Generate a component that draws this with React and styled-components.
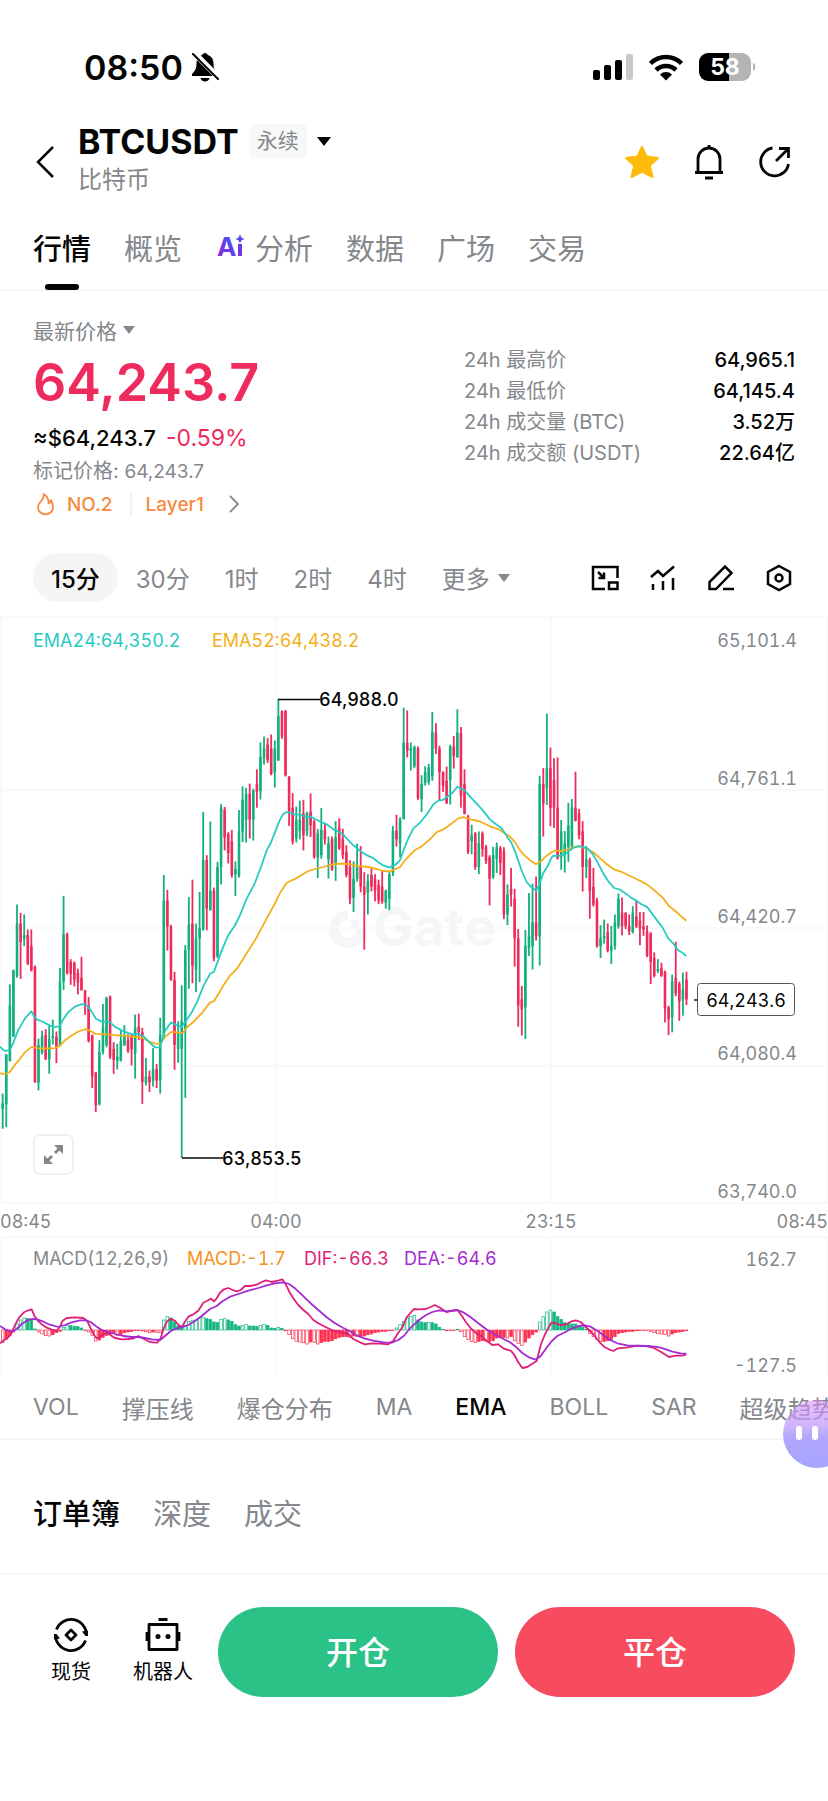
import React from "react";
import styled, { createGlobalStyle, css } from "styled-components";

const GlobalStyle = createGlobalStyle`
  * {
    box-sizing: border-box;
  }
  body {
    margin: 0;
    background: #fff;
    color: #050505;
    font-family: Inter, "Noto Sans CJK SC", sans-serif;
  }
  button,
  a {
    font: inherit;
    color: inherit;
  }
`;

const GREY = "#84888c";
const UP = "#12b07c";
const DOWN = "#ee2b5c";

const plainButton = css`
  display: flex;
  align-items: center;
  border: 0;
  padding: 0;
  background: none;
  cursor: pointer;
  white-space: nowrap;
`;

const Page = styled.div`
  position: relative;
  overflow: hidden;
  min-height: 100vh;
`;

const StatusBar = styled.div`
  display: flex;
  align-items: center;
  justify-content: space-between;
  height: 116px;
  padding: 18px 72px 0 84px;
`;

const Clock = styled.div`
  display: flex;
  align-items: center;
  gap: 8px;
  font-size: 34px;
  font-weight: 600;
`;

const StatusIcons = styled.div`
  display: flex;
  align-items: center;
  gap: 15px;
`;

const Header = styled.header`
  display: flex;
  align-items: center;
  height: 92px;
  padding: 0 37px 0 36px;
`;

const IconButton = styled.button`
  ${plainButton}
`;

const Names = styled.div`
  flex: 1;
  margin-left: 24px;
  padding-bottom: 8px;
`;

const TitleRow = styled.div`
  display: flex;
  align-items: center;
  gap: 10px;
  height: 44px;
`;

const Title = styled.h1`
  margin: 0;
  font-size: 34px;
  font-weight: 700;
`;

const Tag = styled.span`
  padding: 2px 8px;
  border-radius: 5px;
  background: #f7f8f8;
  color: ${GREY};
  font-size: 21px;
  line-height: 30px;
`;

const Subtitle = styled.div`
  color: ${GREY};
  font-size: 24px;
  line-height: 34px;
`;

const HeaderActions = styled.div`
  display: flex;
  gap: 34px;
`;

const Caret = styled.span`
  border-top: ${(p) => p.size + 2}px solid ${(p) => p.color || GREY};
  border-left: ${(p) => p.size}px solid transparent;
  border-right: ${(p) => p.size}px solid transparent;
`;

const Tabs = styled.nav`
  display: flex;
  gap: 33px;
  height: 83px;
  padding: 0 33px;
  border-bottom: 2px solid #f5f5f6;
`;

const Tab = styled.button`
  ${plainButton}
  position: relative;
  gap: 9px;
  padding-bottom: 4px;
  color: ${(p) => (p.$active ? "#050505" : GREY)};
  font-size: 29px;
  font-weight: ${(p) => (p.$active ? 500 : 400)};
  ${(p) =>
    p.$underline &&
    css`
      &::after {
        content: "";
        position: absolute;
        left: 12px;
        right: 12px;
        bottom: -1px;
        height: 6px;
        border-radius: 3px;
        background: #050505;
      }
    `}
`;

const Summary = styled.section`
  display: flex;
  justify-content: space-between;
  padding: 24px 33px 0;
`;

const PriceColumn = styled.div`
  display: flex;
  flex-direction: column;
  align-items: flex-start;
`;

const PriceKind = styled.button`
  ${plainButton}
  gap: 6px;
  height: 30px;
  color: ${GREY};
  font-size: 21px;
`;

const LastPrice = styled.div`
  color: ${DOWN};
  font-size: 52px;
  font-weight: 600;
  line-height: 76px;
`;

const PriceLine = styled.div`
  display: flex;
  gap: 10px;
  font-size: 22px;
  font-weight: 500;
  line-height: 34px;
`;

const Change = styled.span`
  color: ${DOWN};
  font-size: 23px;
  font-weight: 400;
`;

const MarkPrice = styled.div`
  color: ${GREY};
  font-size: 20px;
  line-height: 32px;
`;

const MarkValue = styled.span`
  font-size: 19px;
  line-height: 1;
`;

const Labels = styled.a`
  display: flex;
  align-items: center;
  height: 34px;
  color: #f78a3e;
  font-size: 19px;
  font-weight: 500;
  text-decoration: none;
`;

const LabelText = styled.span`
  padding: 0 17px 0 13px;
  & + & {
    padding: 0 25px 0 14px;
    border-left: 2px solid #f2f2f3;
  }
`;

const Stats = styled.dl`
  display: grid;
  grid-template-columns: auto auto;
  flex: 0 0 331px;
  align-content: start;
  margin: 30px 0 0;
  font-size: 20px;
  line-height: 31px;
`;

const StatName = styled.dt`
  color: ${GREY};
`;

const StatValue = styled.dd`
  margin: 0;
  text-align: right;
  font-weight: 500;
`;

const PeriodBar = styled.div`
  display: flex;
  align-items: center;
  justify-content: space-between;
  height: 49px;
  margin-top: 32px;
  padding: 0 35px 0 33px;
`;

const Periods = styled.div`
  display: flex;
  gap: 1px;
  height: 100%;
`;

const Period = styled.button`
  ${plainButton}
  gap: 8px;
  padding: 0 ${(p) => (p.$active ? 18 : 17)}px;
  border-radius: 25px;
  background: ${(p) => (p.$active ? "#f5f5f6" : "none")};
  color: ${(p) => (p.$active ? "#050505" : GREY)};
  font-size: 24px;
  font-weight: ${(p) => (p.$active ? 500 : 400)};
`;

const Tools = styled.div`
  display: flex;
  gap: 30px;
`;

const ChartArea = styled.section`
  position: relative;
  margin-top: 8px;
`;

const Chart = styled.svg`
  display: block;
  width: 100%;
  height: auto;
  font-size: 18px;
  font-variant-numeric: tabular-nums;
`;

const ExpandButton = styled.button`
  ${plainButton}
  position: absolute;
  left: 33px;
  top: 524px;
  justify-content: center;
  width: 41px;
  height: 41px;
  border: 2px solid #f1f1f2;
  border-radius: 7px;
  background: #fff;
`;

const Indicators = styled.div`
  display: flex;
  gap: 43px;
  height: 64px;
  padding: 0 0 0 33px;
  overflow: hidden;
  border-bottom: 2px solid #f5f5f6;
`;

const Indicator = styled.button`
  ${plainButton}
  flex: none;
  color: ${(p) => (p.$active ? "#050505" : GREY)};
  font-size: ${(p) => (p.$latin ? 23 : 24)}px;
  font-weight: ${(p) => (p.$active ? 500 : 400)};
`;

const BookTabs = styled.div`
  display: flex;
  gap: 33px;
  height: 135px;
  padding: 14px 33px 0;
  border-bottom: 2px solid #f6f6f7;
`;

const Footer = styled.footer`
  display: flex;
  align-items: center;
  gap: 17px;
  padding: 32px 33px 0 51px;
`;

const Shortcuts = styled.div`
  display: flex;
  gap: 42px;
  margin-right: 8px;
`;

const Shortcut = styled.a`
  display: flex;
  flex-direction: column;
  align-items: center;
  gap: 4px;
  font-size: 20px;
  line-height: 30px;
  text-decoration: none;
`;

const TradeButton = styled.button`
  flex: 1;
  height: 90px;
  padding: 0 0 4px;
  border: 0;
  border-radius: 45px;
  background: ${(p) => p.$color};
  color: #fff;
  font-size: 32px;
  font-weight: 500;
  cursor: pointer;
`;

const Assistant = styled.button`
  position: absolute;
  right: -23px;
  top: 1400px;
  display: flex;
  gap: 10px;
  width: 68px;
  height: 68px;
  padding: 26px 0 0 13px;
  border: 0;
  border-radius: 34px;
  background: linear-gradient(rgba(222, 130, 245, 0.5), rgba(190, 160, 252, 0.8) 40%, #b3a6fd 55%, #a5a5ff);
  cursor: pointer;
`;

const Eye = styled.span`
  width: 6px;
  height: 14px;
  border-radius: 3px;
  background: #fff;
`;

const tabs = ["行情", "概览", "分析", "数据", "广场", "交易"];
const stats = [
  ["24h 最高价", "64,965.1"],
  ["24h 最低价", "64,145.4"],
  ["24h 成交量 (BTC)", "3.52万"],
  ["24h 成交额 (USDT)", "22.64亿"],
];
const periods = ["15分", "30分", "1时", "2时", "4时"];
const indicators = ["VOL", "撑压线", "爆仓分布", "MA", "EMA", "BOLL", "SAR", "超级趋势"];

// 15 minute candles: high, low, open, close, as steps down from the top of the scale
const candles = [
  [1223,1312,1262,1248],[1124,1308,1250,1124],[947,1142,1140,1000],[909,1080,1078,912],
  [745,930,925,793],[766,933,793,840],[770,850,832,822],[808,898,822,895],
  [808,914,850,912],[899,1196,902,1194],[1084,1215,1195,1100],[1064,1124,1120,1078],
  [1060,1138,1075,1136],[1050,1173,1136,1085],[1036,1099,1082,1078],[1066,1146,1080,1104],
  [905,1104,1100,940],[723,961,940,820],[816,922,820,918],[883,948,890,920],
  [889,952,892,935],[907,972,918,942],[877,962,930,962],[961,1024,962,1000],
  [979,1094,1000,1090],[1074,1209,1076,1180],[1168,1270,1170,1252],[1088,1253,1250,1118],
  [996,1124,1118,1056],[978,1106,1100,982],[975,1136,978,1130],[1093,1173,1110,1138],
  [1097,1162,1140,1130],[1064,1142,1140,1090],[1050,1103,1100,1075],[1073,1120,1088,1115],
  [1073,1152,1075,1110],[1023,1185,1122,1056],[1021,1088,1054,1068],[1057,1249,1068,1194],
  [1133,1203,1195,1180],[1165,1219,1180,1195],[1108,1205,1190,1160],[1148,1209,1162,1190],
  [1031,1223,1190,1075],[670,1082,1078,735],[708,861,735,800],[796,938,800,935],
  [915,1163,935,1100],[1040,1145,1110,1070],[949,1386,1110,1040],[847,1234,1060,860],
  [726,958,860,795],[682,944,793,900],[793,966,910,830],[713,941,830,805],
  [511,811,808,632],[620,810,632,755],[535,761,758,710],[702,888,710,880],
  [637,880,876,650],[491,694,650,500],[498,608,505,575],[562,641,566,615],
  [556,677,585,670],[636,723,668,655],[506,677,672,560],[446,587,560,480],
  [450,588,530,465],[439,578,465,530],[452,583,530,456],[403,500,440,460],
  [335,479,458,372],[320,391,375,350],[324,387,340,380],[315,418,350,415],
  [330,449,410,350],[226,382,380,268],[254,326,256,320],[253,421,256,418],
  [420,546,422,510],[463,593,500,585],[497,588,578,530],[482,580,560,530],
  [480,608,515,570],[510,572,560,514],[464,574,510,545],[530,629,535,625],
  [554,678,626,565],[501,629,620,556],[540,593,556,580],[573,679,630,590],
  [573,660,580,656],[534,685,640,575],[527,607,550,603],[553,630,580,620],
  [595,676,612,670],[633,744,650,730],[636,764,728,680],[591,687,680,650],
  [597,714,650,700],[663,859,700,720],[668,770,715,685],[652,712,670,700],
  [668,737,680,710],[682,744,695,735],[658,743,700,738],[707,755,740,710],
  [660,759,730,668],[546,673,665,558],[518,598,558,580],[524,626,590,530],
  [247,530,528,336],[254,373,336,355],[335,406,356,350],[343,400,395,346],
  [345,481,350,475],[418,511,478,440],[395,444,438,410],[389,442,436,398],
  [258,432,420,308],[286,364,310,350],[343,482,350,410],[408,460,410,445],
  [396,491,432,488],[341,492,430,345],[319,401,345,370],[251,374,372,310],
  [296,500,312,470],[403,517,440,515],[518,617,522,612],[543,618,585,570],
  [562,657,565,650],[560,668,650,590],[560,624,565,605],[594,642,600,635],
  [620,747,625,680],[599,680,675,620],[588,665,630,600],[597,670,602,640],
  [600,782,610,770],[694,797,770,720],[652,750,705,720],[705,902,730,830],
  [807,1054,830,1000],[951,1076,985,1010],[809,1085,1005,850],[716,875,855,825],
  [692,909,850,790],[674,836,790,825],[419,899,825,440],[400,573,440,490],
  [262,493,450,400],[348,547,400,500],[375,551,430,500],[373,631,500,628],
  [531,657,625,560],[559,664,620,590],[488,637,600,545],[478,602,598,500],
  [409,535,500,532],[503,580,515,570],[534,712,560,650],[597,678,650,630],
  [626,781,632,710],[652,750,700,745],[728,854,735,850],[797,880,850,830],
  [783,844,830,825],[793,866,815,862],[799,895,862,850],[770,859,850,790],
  [717,806,800,730],[727,823,765,800],[764,807,766,800],[770,822,800,812],
  [749,818,815,765],[734,804,775,800],[764,848,785,805],[764,824,800,808],
  [798,878,812,875],[815,946,818,890],[866,929,880,925],[883,918,913,908],
  [892,928,905,925],[912,1043,915,1008],[1001,1075,1005,1035],[922,1068,1030,940],
  [839,977,930,970],[940,1039,945,990],[917,1026,985,960],[915,999,935,985],
];

const ema24 = [
  0,1104,10,1113,18,1115,30,1112,40,1095,55,1062,75,1033,94,1015,104,1030,112,1036,130,1042,150,1051,
  165,1054,178,1053,190,1035,205,1017,225,1003,245,997,258,998,272,1012,288,1034,305,1041,320,1041,
  330,1043,345,1054,362,1062,385,1070,400,1073,415,1072,430,1078,450,1095,465,1106,480,1106,495,1065,
  513,1043,530,1050,545,1054,557,1040,575,1018,592,990,610,952,630,920,642,915,655,885,668,855,
  685,822,705,798,720,772,740,730,765,690,785,645,800,608,813,588,825,562,840,530,850,516,860,511,
  870,513,885,517,900,518,915,522,935,524,960,535,980,542,1000,555,1015,560,1030,568,1045,582,
  1060,595,1075,605,1090,615,1105,622,1120,628,1135,638,1150,646,1168,651,1185,645,1200,633,1212,605,
  1225,578,1240,553,1260,538,1280,517,1300,492,1315,482,1330,480,1345,470,1358,462,1372,447,1382,451,
  1395,457,1410,472,1430,490,1450,508,1470,530,1490,543,1505,552,1520,572,1535,590,1550,622,1565,660,
  1580,688,1595,702,1608,710,1618,695,1630,665,1645,645,1652,630,1659,622,1674,622,1689,620,1704,612,
  1719,602,1736,597,1749,599,1764,604,1779,618,1794,640,1809,665,1824,685,1842,703,1859,707,1879,718,
  1894,728,1909,735,1924,744,1941,751,1959,771,1974,788,1989,805,2004,830,2019,843,2034,860,2046,866,
  2059,875,
];

const ema52 = [
  0,1172,15,1174,30,1168,45,1150,60,1135,75,1118,95,1105,110,1108,135,1109,165,1108,180,1102,195,1088,
  215,1076,235,1066,257,1060,270,1064,287,1072,320,1073,345,1075,385,1078,410,1080,430,1083,450,1092,
  470,1097,482,1096,495,1080,513,1067,530,1068,548,1070,560,1056,580,1042,605,1020,630,993,642,989,
  655,972,670,950,690,925,710,908,740,868,770,828,800,780,820,750,840,716,860,690,885,680,905,670,
  925,660,945,655,970,650,995,644,1025,641,1050,643,1075,648,1105,650,1130,655,1150,660,1168,661,
  1185,656,1200,650,1215,633,1230,620,1245,607,1265,598,1290,580,1310,562,1330,555,1355,540,1375,527,
  1390,524,1410,529,1440,535,1470,547,1495,554,1510,562,1530,573,1545,587,1560,608,1575,622,1590,633,
  1608,643,1622,636,1635,625,1650,615,1664,608,1684,610,1704,606,1719,600,1736,598,1754,602,1779,612,
  1799,627,1819,642,1842,656,1864,662,1889,672,1914,682,1941,694,1964,710,1989,728,2006,748,2024,760,
  2044,775,2059,786,
];

const dif = [
  0,340,12,330,25,322,35,308,45,285,58,262,72,247,85,241,95,238,103,257,112,270,125,283,140,293,
  155,299,170,302,180,290,188,272,200,264,225,262,250,264,262,273,272,295,280,312,290,325,300,320,
  310,313,320,309,330,314,345,324,365,328,385,327,402,325,415,318,428,325,445,334,460,337,472,338,
  482,325,490,298,500,275,512,266,525,272,535,284,545,292,555,275,566,259,580,253,595,242,610,218,
  622,212,632,206,642,214,650,205,660,188,672,178,685,174,698,180,710,184,722,180,735,168,750,168,
  770,164,785,156,798,151,815,156,830,153,847,148,857,163,868,185,880,205,895,225,910,240,925,252,
  940,270,955,280,975,290,1000,302,1025,308,1045,312,1060,327,1080,337,1095,343,1115,340,1140,341,
  1165,343,1180,332,1195,308,1208,290,1220,262,1232,248,1242,237,1257,238,1277,237,1292,231,1304,225,
  1320,233,1339,246,1352,243,1372,240,1384,255,1397,275,1412,295,1427,308,1442,318,1457,330,1477,345,
  1494,343,1512,356,1532,362,1542,373,1554,395,1567,414,1582,411,1597,401,1610,393,1622,345,1634,315,
  1647,290,1655,277,1667,280,1682,285,1697,284,1712,275,1727,271,1742,276,1754,288,1767,300,1782,315,
  1797,335,1812,350,1827,358,1840,363,1854,355,1882,352,1912,347,1937,348,1957,352,1982,365,2007,381,
  2027,377,2047,377,2059,373,
];

const dea = [
  0,288,15,298,35,305,50,297,65,282,80,272,95,267,112,268,130,275,150,284,175,291,195,285,215,277,
  240,271,258,271,272,276,287,288,305,300,325,306,345,312,370,318,395,321,415,321,435,324,455,328,
  480,330,495,318,512,303,530,295,550,290,565,285,585,273,605,258,630,237,650,228,665,215,690,200,
  715,192,745,182,775,174,800,166,825,160,850,157,867,162,885,175,905,194,930,218,955,240,980,262,
  1005,280,1030,294,1050,304,1070,316,1095,326,1120,332,1150,337,1175,338,1195,330,1212,317,1230,295,
  1242,284,1257,270,1277,256,1297,246,1317,241,1342,244,1372,240,1392,248,1412,262,1437,281,1462,300,
  1487,315,1512,328,1532,338,1547,350,1567,369,1587,382,1607,389,1622,378,1637,357,1654,335,1672,318,
  1692,308,1717,295,1737,288,1754,286,1772,290,1792,302,1812,317,1832,331,1852,340,1882,346,1922,348,
  1947,348,1982,353,2017,365,2042,370,2059,371,
];

const macd = [
  -38,-28,-18,-6,18,30,36,35,32,3,-6,-12,-17,-18,-14,-8,-4,8,14,13,11,10,6,0,-6,-16,-33,-30,-22,-16,
  -12,-10,-16,-14,-8,-6,-4,-2,0,-3,-5,-8,-6,-7,-8,30,40,36,24,12,10,14,26,28,30,36,38,34,32,24,22,32,
  34,30,26,16,12,14,16,12,12,10,14,16,14,6,5,8,5,-2,-14,-26,-34,-36,-38,-42,-36,-37,-42,-38,-34,-34,
  -32,-26,-22,-20,-20,-22,-18,-20,-18,-18,-14,-12,-8,-6,-4,-4,-2,-1,6,16,26,38,40,44,30,24,22,23,22,
  18,8,2,-2,-1,0,2,-4,-20,-28,-34,-38,-34,-32,-34,-34,-32,-24,-22,-22,-24,-20,-32,-40,-46,-36,-24,-14,
  -6,24,40,54,60,54,40,32,22,20,18,18,14,8,2,-10,-20,-28,-34,-34,-32,-28,-20,-10,-8,-6,-4,-4,-2,0,0,
  -1,-4,-8,-10,-12,-14,-18,-12,-8,-6,-4,-2,
];

const candleX = (i) => 2.7 + i * 3.58;
const priceY = (level) => level * 0.3954;
const macdY = (level) => 620 + level / 3;

const linePoints = (values, scaleY) => {
  const points = [];
  for (let i = 0; i < values.length; i += 2) {
    points.push(`${(values[i] / 3).toFixed(1)},${scaleY(values[i + 1]).toFixed(1)}`);
  }
  return points.join(" ");
};

const Candle = ({ index, data }) => {
  const [high, low, open, close] = data;
  const x = candleX(index);
  const top = priceY(Math.min(open, close));
  const height = Math.max(priceY(Math.abs(open - close)), 1);
  return (
    <g fill={close < open ? UP : DOWN}>
      <rect x={x - 0.9} y={priceY(high)} width="1.8" height={priceY(low - high)} />
      <rect x={x - 1.3} y={top} width="2.6" height={height} />
    </g>
  );
};

const MacdBar = ({ index, value }) => {
  const growing = Math.abs(value) > Math.abs(macd[index - 1] || 0);
  const color = value > 0 ? "#17b581" : "#fb3150";
  const height = Math.max(Math.abs(value) / 3, 0.6);
  return (
    <rect
      x={candleX(index) - 1.3}
      y={value > 0 ? 720 - height : 720}
      width="2.6"
      height={height}
      fill={growing ? "#fff" : color}
      stroke={color}
      strokeWidth="0.7"
    />
  );
};

const PriceChart = () => (
  <Chart viewBox="0 0 828 766" role="img" aria-label="BTCUSDT K线">
    <g stroke="#f9f9fa" strokeWidth="2">
      {[7, 180, 318, 456, 593, 627].map((y) => (
        <path key={y} d={`M0 ${y}H828`} />
      ))}
      {[1, 276, 551, 827].map((x) => (
        <path key={x} d={`M${x} 7V593M${x} 627V766`} />
      ))}
    </g>
    <g fill="#f4f6f7">
      <path d="M348 300a19 19 0 1 0 19 19h-10a9 9 0 1 1-9-9z" />
      <path d="M351 310h9l-3 9h-6z" />
      <text x="373" y="336" fontSize="54" fontWeight="700">Gate</text>
    </g>
    {candles.map((data, i) => (
      <Candle key={i} index={i} data={data} />
    ))}
    <g fill="none" strokeWidth="1.8" strokeLinejoin="round">
      <polyline points={linePoints(ema52, priceY)} stroke="#f3b01c" />
      <polyline points={linePoints(ema24, priceY)} stroke="#27cbc3" />
    </g>
    <g stroke="#050505" strokeWidth="1.4">
      <path d="M278 89.5H320" />
      <path d="M182 548H223" />
      <path d="M694 390H697" />
    </g>
    <g fill="#050505" fontWeight="500">
      <text x="319" y="96">64,988.0</text>
      <text x="222" y="555">63,853.5</text>
    </g>
    <rect x="697.5" y="373.5" width="97" height="32" rx="3" fill="#fff" stroke="#555" />
    <text x="746" y="397" textAnchor="middle" fill="#050505">64,243.6</text>
    <text x="33" y="37" fill="#27cbc3">EMA24:64,350.2</text>
    <text x="212" y="37" fill="#f3b01c">EMA52:64,438.2</text>
    <g fill={GREY} textAnchor="end">
      <text x="797" y="37">65,101.4</text>
      <text x="797" y="175">64,761.1</text>
      <text x="797" y="313">64,420.7</text>
      <text x="797" y="450">64,080.4</text>
      <text x="797" y="588">63,740.0</text>
      <text x="797" y="656">162.7</text>
      <text x="797" y="762">-127.5</text>
      <text x="828" y="618">08:45</text>
    </g>
    <g fill={GREY}>
      <text x="0" y="618">08:45</text>
      <text x="276" y="618" textAnchor="middle">04:00</text>
      <text x="551" y="618" textAnchor="middle">23:15</text>
    </g>
    <text x="33" y="655" fill={GREY}>MACD(12,26,9)</text>
    <text x="187" y="655" fill="#f39320">MACD:-1.7</text>
    <text x="304" y="655" fill="#e01f78">DIF:-66.3</text>
    <text x="404" y="655" fill="#a32bd0">DEA:-64.6</text>
    {macd.map((value, i) => (
      <MacdBar key={i} index={i} value={value} />
    ))}
    <g fill="none" strokeWidth="1.8" strokeLinejoin="round">
      <polyline points={linePoints(dif, macdY)} stroke="#e01f78" />
      <polyline points={linePoints(dea, macdY)} stroke="#a32bd0" />
    </g>
  </Chart>
);

const BellOffIcon = () => (
  <svg width="28" height="30" viewBox="0 0 28 30">
    <path d="M14 1c1.600 0 2.500 1 2.700 2 4 1.200 5.800 4.500 5.800 8.500 0 6 2 7.500 4.500 10.500v2H1v-2c2.500-3 4.500-4.500 4.500-10.500 0-4 1.800-7.300 5.800-8.500.2-1 1.100-2 2.700-2z" />
    <path d="M9.500 26h9c-.5 2.200-2 3.500-4.500 3.500S10 28.200 9.500 26z" />
    <path d="M3 1L28 26" stroke="#fff" strokeWidth="6" />
    <path d="M2 2L27 27" stroke="#000" strokeWidth="2" strokeLinecap="round" />
  </svg>
);

const SignalIcon = () => (
  <svg width="40" height="27" viewBox="0 0 40 27">
    <rect y="16" width="7" height="10" rx="2" />
    <rect x="11" y="11" width="7" height="15" rx="2" />
    <rect x="22" y="6" width="7" height="20" rx="2" />
    <rect x="33" width="7" height="26" rx="2" fill="#c9c9c9" />
  </svg>
);

const WifiIcon = () => (
  <svg width="36" height="27" viewBox="0 0 36 27">
    <g fill="none" stroke="#000" strokeWidth="4.500">
      <path d="M2.500 9.500a22 22 0 0 1 31 0" />
      <path d="M8 16a14.500 14.500 0 0 1 20 0" />
    </g>
    <path d="M12 20.500a8.500 8.500 0 0 1 12 0l-6 6z" />
  </svg>
);

const BatteryIcon = () => (
  <svg width="57" height="28" viewBox="0 0 57 28">
    <path d="M9 0H30V28H9a9 9 0 0 1-9-9V9a9 9 0 0 1 9-9z" />
    <path d="M30 0H43a9 9 0 0 1 9 9V19a9 9 0 0 1-9 9H30z" fill="#b4b4b4" />
    <path d="M54 10c3 1 3 7 0 8z" fill="#b4b4b4" />
    <text x="26" y="22" textAnchor="middle" fill="#fff" fontSize="23" fontWeight="700">58</text>
  </svg>
);

const BackIcon = () => (
  <svg width="18" height="32" viewBox="0 0 18 32" fill="none" stroke="#050505" strokeWidth="2.500">
    <path d="M17 1L2 16l15 15" />
  </svg>
);

const StarIcon = () => (
  <svg width="36" height="34" viewBox="0 0 36 34">
    <path
      d="M18 2l4.700 9.600 11.300 1.300-8.200 7.600 2.700 11.500L18 26.500 7.500 32l2.700-11.500L2 12.900l11.300-1.300z"
      fill="#ffbb0a"
      stroke="#ffbb0a"
      strokeWidth="2"
      strokeLinejoin="round"
    />
  </svg>
);

const BellIcon = () => (
  <svg width="30" height="36" viewBox="0 0 30 36" fill="none" stroke="#050505" strokeWidth="2.800">
    <path d="M4 28V15a11 11 0 0 1 22 0v13M1 28.500h28M15 4V1M11 34h8" />
  </svg>
);

const ShareIcon = () => (
  <svg width="33" height="34" viewBox="0 0 33 34" fill="none" stroke="#050505" strokeWidth="2.800">
    <path d="M14.500 3A14 14 0 1 0 30.500 19M18 16L30 4M21 3.500h9.500V13" />
  </svg>
);

const AiIcon = () => (
  <svg width="31" height="36" viewBox="0 0 31 36">
    <defs>
      <linearGradient id="ai" x1="0" y1="1" x2="1" y2="0">
        <stop offset="0.200" stopColor="#8a2be2" />
        <stop offset="1" stopColor="#2a5cf5" />
      </linearGradient>
    </defs>
    <g fill="url(#ai)">
      <text x="2" y="27" fontSize="26" fontWeight="700">A</text>
      <path d="M23 15h4v12h-4zM25 5c.8 3.400 1.600 4.200 5 5-3.400.8-4.200 1.600-5 5-.8-3.400-1.600-4.200-5-5 3.400-.8 4.200-1.600 5-5z" />
    </g>
  </svg>
);

const FlameIcon = () => (
  <svg width="21" height="24" viewBox="0 0 21 24" fill="none" stroke="#f78a3e" strokeWidth="1.800">
    <path d="M10.500 2c.8 3.500-.5 5-2.500 7.200C6.200 11.200 5 12.800 5 15.300a7.500 7 0 0 0 15 0c0-3-1-5.300-2-7.300-.4 2-1.200 3-2.500 3.500.3-4-1.500-7.500-5-9.500z" strokeLinejoin="round" />
  </svg>
);

const ChevronIcon = () => (
  <svg width="10" height="18" viewBox="0 0 10 18" fill="none" stroke={GREY} strokeWidth="1.800">
    <path d="M1 1l8 8-8 8" />
  </svg>
);

const PipIcon = () => (
  <svg width="28" height="28" viewBox="0 0 28 28" fill="none" stroke="#050505" strokeWidth="2.500">
    <path d="M14 25H2V3h24.500v11M18 18.500h8.500V25H18zM7 8l6 6M13 8.500V14H7.500" />
  </svg>
);

const TrendIcon = () => (
  <svg width="28" height="28" viewBox="0 0 28 28" fill="none" stroke="#050505" strokeWidth="2.500">
    <path d="M2 13l7-6 5 5L25 2.500M4 20v6M14 17v9M24 14v12" />
  </svg>
);

const PenIcon = () => (
  <svg width="28" height="28" viewBox="0 0 28 28" fill="none" stroke="#050505" strokeWidth="2.500">
    <path d="M2.500 25v-7L18 2.500l6.500 6.500L9 25zM16 25h11" />
  </svg>
);

const HexIcon = () => (
  <svg width="28" height="28" viewBox="0 0 28 28" fill="none" stroke="#050505" strokeWidth="2.500">
    <path d="M14 2l11 6v12l-11 6-11-6V8z" />
    <circle cx="14" cy="14" r="3.500" />
  </svg>
);

const ExpandIcon = () => (
  <svg width="21" height="21" viewBox="0 0 21 21" fill={GREY} stroke={GREY} strokeWidth="3">
    <path d="M12 9l5-5M9 12l-5 5" />
    <path d="M11 1h9v9zM1 11v9h9z" stroke="none" />
  </svg>
);

const SpotIcon = () => (
  <svg width="36" height="36" viewBox="0 0 36 36" fill="none" stroke="#050505" strokeWidth="2.800">
    <path d="M3.500 12.500A15.500 15.500 0 0 1 33.500 18M32.500 23.500A15.500 15.500 0 0 1 2.500 18" />
    <path d="M18 13l5 5-5 5-5-5z" strokeLinejoin="round" />
    <path d="M29 14.500l6-1v5.500h-2.500zM7 21.500l-6 1v-5.500h2.500z" fill="#050505" stroke="none" />
  </svg>
);

const RobotIcon = () => (
  <svg width="36" height="36" viewBox="0 0 36 36" fill="none" stroke="#050505" strokeWidth="2.800">
    <path d="M4 7.500h28v25H4zM13.500 2.500h9M2 15v9M34 15v9" strokeLinejoin="round" />
    <circle cx="13" cy="19.500" r="2.500" fill="#050505" stroke="none" />
    <circle cx="23" cy="19.500" r="2.500" fill="#050505" stroke="none" />
  </svg>
);

const App = () => (
  <Page>
    <GlobalStyle />
    <StatusBar>
      <Clock>
        08:50
        <BellOffIcon />
      </Clock>
      <StatusIcons>
        <SignalIcon />
        <WifiIcon />
        <BatteryIcon />
      </StatusIcons>
    </StatusBar>

    <Header>
      <IconButton aria-label="返回">
        <BackIcon />
      </IconButton>
      <Names>
        <TitleRow>
          <Title>BTCUSDT</Title>
          <Tag>永续</Tag>
          <Caret size={7} color="#050505" />
        </TitleRow>
        <Subtitle>比特币</Subtitle>
      </Names>
      <HeaderActions>
        <IconButton aria-label="收藏"><StarIcon /></IconButton>
        <IconButton aria-label="提醒"><BellIcon /></IconButton>
        <IconButton aria-label="分享"><ShareIcon /></IconButton>
      </HeaderActions>
    </Header>

    <Tabs>
      {tabs.map((name, i) => (
        <Tab key={name} $active={i === 0} $underline={i === 0}>
          {name === "分析" && <AiIcon />}
          {name}
        </Tab>
      ))}
    </Tabs>

    <Summary>
      <PriceColumn>
        <PriceKind>
          最新价格
          <Caret size={6} />
        </PriceKind>
        <LastPrice>64,243.7</LastPrice>
        <PriceLine>
          ≈$64,243.7
          <Change>-0.59%</Change>
        </PriceLine>
        <MarkPrice>
          标记价格: <MarkValue>64,243.7</MarkValue>
        </MarkPrice>
        <Labels href="#labels">
          <FlameIcon />
          <LabelText>NO.2</LabelText>
          <LabelText>Layer1</LabelText>
          <ChevronIcon />
        </Labels>
      </PriceColumn>
      <Stats>
        {stats.map(([name, value]) => (
          <React.Fragment key={name}>
            <StatName>{name}</StatName>
            <StatValue>{value}</StatValue>
          </React.Fragment>
        ))}
      </Stats>
    </Summary>

    <PeriodBar>
      <Periods>
        {periods.map((name, i) => (
          <Period key={name} $active={i === 0}>
            {name}
          </Period>
        ))}
        <Period>
          更多
          <Caret size={6} />
        </Period>
      </Periods>
      <Tools>
        <IconButton aria-label="小窗"><PipIcon /></IconButton>
        <IconButton aria-label="指标"><TrendIcon /></IconButton>
        <IconButton aria-label="画线"><PenIcon /></IconButton>
        <IconButton aria-label="设置"><HexIcon /></IconButton>
      </Tools>
    </PeriodBar>

    <ChartArea>
      <PriceChart />
      <ExpandButton aria-label="全屏">
        <ExpandIcon />
      </ExpandButton>
    </ChartArea>

    <Indicators>
      {indicators.map((name) => (
        <Indicator key={name} $active={name === "EMA"} $latin={/^[A-Z]/.test(name)}>
          {name}
        </Indicator>
      ))}
    </Indicators>

    <BookTabs>
      <Tab $active>订单簿</Tab>
      <Tab>深度</Tab>
      <Tab>成交</Tab>
    </BookTabs>

    <Footer>
      <Shortcuts>
        <Shortcut href="#spot">
          <SpotIcon />
          现货
        </Shortcut>
        <Shortcut href="#robot">
          <RobotIcon />
          机器人
        </Shortcut>
      </Shortcuts>
      <TradeButton $color="#2bc287">开仓</TradeButton>
      <TradeButton $color="#f74b60">平仓</TradeButton>
    </Footer>

    <Assistant aria-label="助手">
      <Eye />
      <Eye />
    </Assistant>
  </Page>
);

export default App;
